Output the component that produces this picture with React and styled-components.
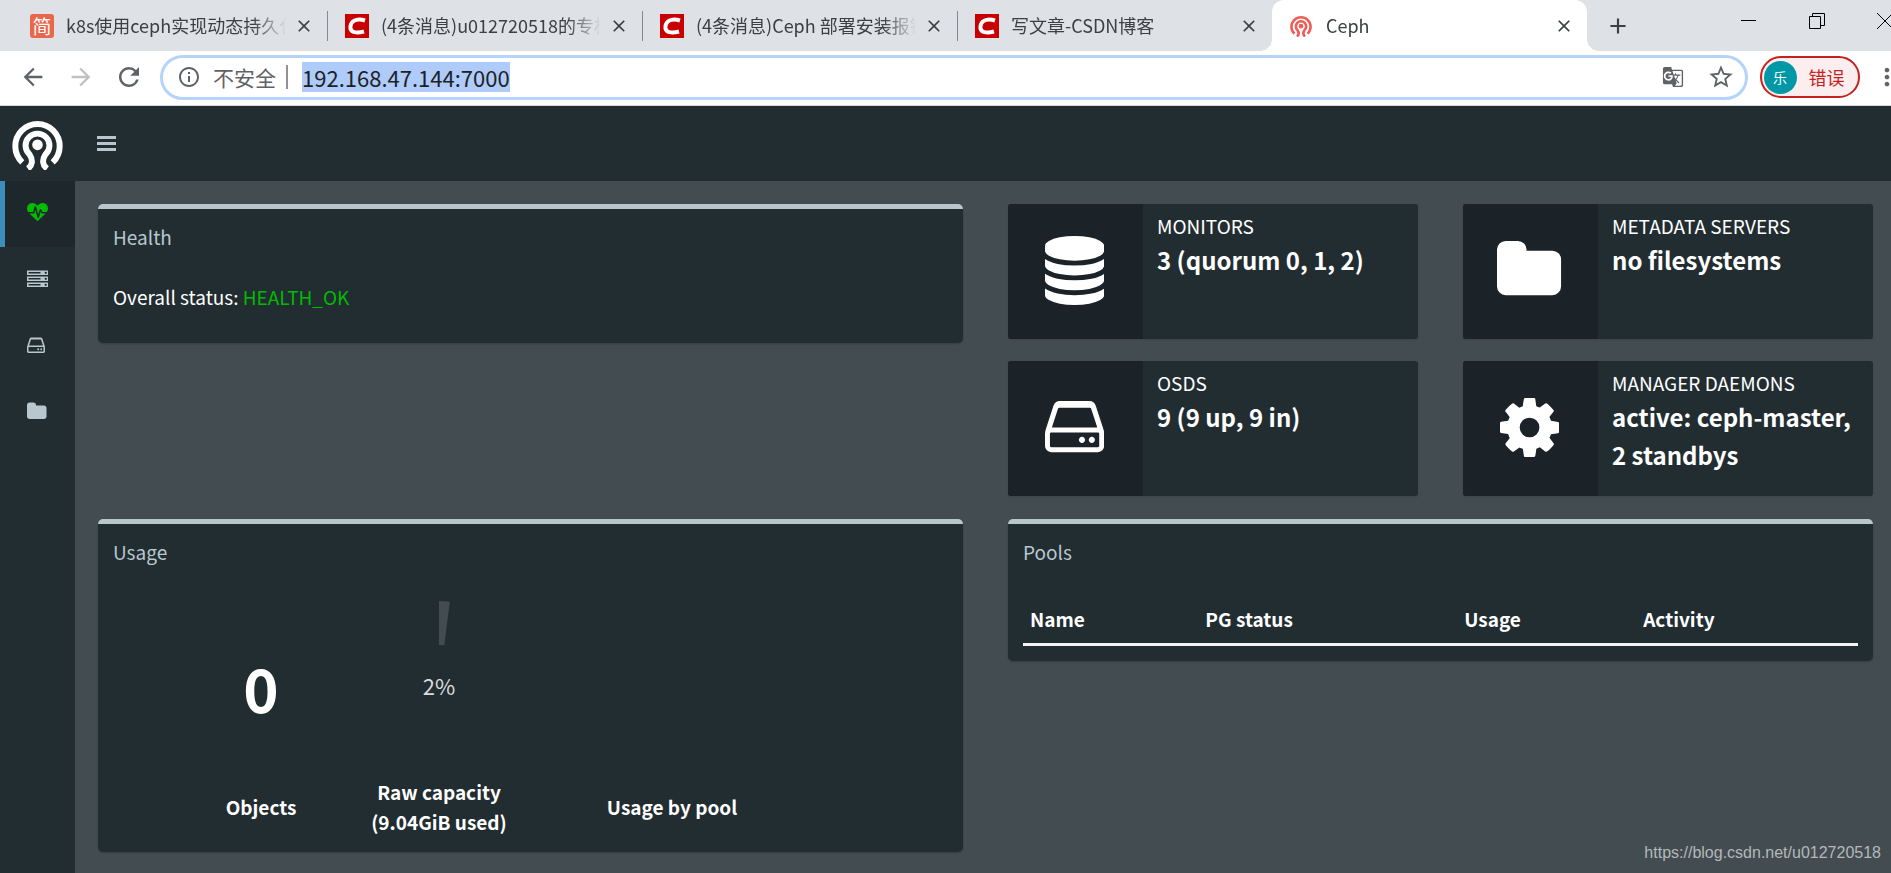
import styled, { createGlobalStyle } from "styled-components";
import { MdArrowBack, MdArrowForward, MdRefresh, MdInfoOutline, MdStarBorder, MdGTranslate, MdMoreVert, MdClose, MdAdd } from "react-icons/md";

const icons = {
  heartbeat: {
    box: "0 0 1792 1792",
    d: "M1280 896h305q-5 6-10 10.5t-9 7.5l-3 4-623 600q-18 18-44 18t-44-18l-624-602q-5-2-21-20h369q22 0 39.5-13.5t22.5-34.5l70-281 190 667q6 20 23 33t39 13q21 0 38-13t23-33l146-485 56 112q18 35 57 35zm512-428q0 145-103 300h-369l-111-221q-8-17-25.5-27t-36.5-8q-45 5-56 46l-129 430-196-686q-6-20-23.5-33t-39.5-13-39 13.5-22 34.5l-116 464h-423q-103-155-103-300 0-220 127-344t351-124q62 0 126.5 21.5t120 58 95.5 68.5 76 68q36-36 76-68t95.5-68.5 120-58 126.5-21.5q224 0 351 124t127 344z",
  },
  server: {
    box: "0 0 1792 1792",
    d: "M128 1408h1024v-128h-1024v128zm0-512h1024v-128h-1024v128zm1568 448q0-40-28-68t-68-28-68 28-28 68 28 68 68 28 68-28 28-68zm-1568-960h1024v-128h-1024v128zm1568 448q0-40-28-68t-68-28-68 28-28 68 28 68 68 28 68-28 28-68zm0-512q0-40-28-68t-68-28-68 28-28 68 28 68 68 28 68-28 28-68zm96 832v384h-1792v-384h1792zm0-512v384h-1792v-384h1792zm0-512v384h-1792v-384h1792z",
  },
  hdd: {
    box: "128 0 1536 1792",
    d: "M1168 1216q0 33-23.5 56.5t-56.5 23.5-56.5-23.5-23.5-56.5 23.5-56.5 56.5-23.5 56.5 23.5 23.5 56.5zm256 0q0 33-23.5 56.5t-56.5 23.5-56.5-23.5-23.5-56.5 23.5-56.5 56.5-23.5 56.5 23.5 23.5 56.5zm112 160v-320q0-13-9.5-22.5t-22.5-9.5h-1216q-13 0-22.5 9.5t-9.5 22.5v320q0 13 9.5 22.5t22.5 9.5h1216q13 0 22.5-9.5t9.5-22.5zm-1230-480h1180l-157-482q-4-13-16-21.5t-26-8.5h-782q-14 0-26 8.5t-16 21.5zm1358 160v320q0 66-47 113t-113 47h-1216q-66 0-113-47t-47-113v-320q0-49 25-126l197-606q16-50 60-82t96-32h782q52 0 96 32t60 82l197 606q25 77 25 126z",
  },
  folder: {
    box: "64 0 1664 1792",
    d: "M1728 608v704q0 92-66 158t-158 66h-1216q-92 0-158-66t-66-158v-960q0-92 66-158t158-66h320q92 0 158 66t66 158v32h672q92 0 158 66t66 158z",
  },
  database: {
    box: "128 0 1536 1792",
    d: "M896 768q237 0 443-43t325-127v170q0 69-103 128t-280 93.5-385 34.5-385-34.5-280-93.5-103-128v-170q119 84 325 127t443 43zm0 768q237 0 443-43t325-127v170q0 69-103 128t-280 93.5-385 34.5-385-34.5-280-93.5-103-128v-170q119 84 325 127t443 43zm0-384q237 0 443-43t325-127v170q0 69-103 128t-280 93.5-385 34.5-385-34.5-280-93.5-103-128v-170q119 84 325 127t443 43zm0-1152q208 0 385 34.5t280 93.5 103 128v128q0 69-103 128t-280 93.5-385 34.5-385-34.5-280-93.5-103-128v-128q0-69 103-128t280-93.5 385-34.5z",
  },
  cog: {
    box: "128 0 1536 1792",
    d: "M1152 896q0-106-75-181t-181-75-181 75-75 181 75 181 181 75 181-75 75-181zm512-109v222q0 12-8 23t-20 13l-185 28q-19 54-39 91 35 50 107 138 10 12 10 25t-9 23q-27 37-99 108t-94 71q-12 0-26-9l-138-108q-44 23-91 38-16 136-29 186-7 28-36 28h-222q-14 0-24.5-8.5t-11.5-21.5l-28-184q-49-16-90-37l-141 107q-10 9-25 9-14 0-25-11-126-114-165-168-7-10-7-23 0-12 8-23 15-21 51-66.5t54-70.5q-27-50-41-99l-183-27q-13-2-21-12.5t-8-23.5v-222q0-12 8-23t19-13l186-28q14-46 39-92-40-57-107-138-10-12-10-24 0-10 9-23 26-36 98.5-107.5t94.5-71.5q13 0 26 10l138 107q44-23 91-38 16-136 29-186 7-28 36-28h222q14 0 24.5 8.5t11.5 21.5l28 184q49 16 90 37l142-107q9-9 24-9 13 0 25 10 129 119 165 170 7 8 7 22 0 12-8 23-15 21-51 66.5t-54 70.5q26 50 41 98l183 28q13 2 21 12.5t8 23.5z",
  },
};

const Icon = ({ name, size }) => (
  <svg height={size} viewBox={icons[name].box} fill="currentColor" aria-hidden="true">
    <path d={icons[name].d} />
  </svg>
);

const CephLogo = ({ size }) => (
  <svg width={size} height={size} viewBox="0 0 154 154" fill="none" stroke="currentColor" strokeWidth="18" aria-hidden="true">
    <path d="M31 131A67 67 0 1 1 123 131" />
    <path d="M48 150C62 140 64 124 53 107A36 36 0 1 1 101 107C90 124 92 140 106 150" />
    <circle cx="77" cy="78" r="16" fill="currentColor" stroke="none" />
  </svg>
);

const tabs = [
  { icon: "jian", title: "k8s使用ceph实现动态持久化" },
  { icon: "csdn", title: "(4条消息)u012720518的专栏" },
  { icon: "csdn", title: "(4条消息)Ceph 部署安装报错" },
  { icon: "csdn", title: "写文章-CSDN博客" },
  { icon: "ceph", title: "Ceph", active: true },
];

const menu = [
  { icon: "heartbeat", label: "Cluster health", active: true },
  { icon: "server", label: "Cluster" },
  { icon: "hdd", label: "Block" },
  { icon: "folder", label: "Filesystems" },
];

const stats = [
  { icon: "database", label: "Monitors", value: "3 (quorum 0, 1, 2)" },
  { icon: "folder", label: "Metadata servers", value: "no filesystems" },
  { icon: "hdd", label: "OSDs", value: "9 (9 up, 9 in)" },
  { icon: "cog", label: "Manager daemons", value: "active: ceph-master, 2 standbys" },
];

const Favicon = ({ type }) => {
  if (type === "jian") return <JianIcon>简</JianIcon>;
  if (type === "ceph") return <CephIcon><CephLogo size={22} /></CephIcon>;
  return (
    <CsdnIcon>
      <svg width="24" height="24" viewBox="0 0 24 24" fill="none" aria-hidden="true">
        <path d="M20 6.500C15 5 7 4.500 5.500 12C4.500 19 12 19.500 19 17.500" stroke="#fff" strokeWidth="4" />
      </svg>
    </CsdnIcon>
  );
};

const Browser = () => (
  <>
    <TabStrip>
      {tabs.map((tab, i) => {
        const TabItem = tab.active ? ActiveTab : i < 3 ? DividedTab : Tab;
        return (
          <TabItem key={i}>
            <Favicon type={tab.icon} />
            <TabTitle>{tab.title}</TabTitle>
            <TabButton aria-label="Close tab"><MdClose size={20} stroke="currentColor" /></TabButton>
          </TabItem>
        );
      })}
      <NewTab aria-label="New tab"><MdAdd size={26} stroke="currentColor" /></NewTab>
      <WindowButtons>
        <TabButton aria-label="Minimize">
          <svg width="16" height="16" stroke="#000"><path d="M0 7.500H15" /></svg>
        </TabButton>
        <TabButton aria-label="Restore">
          <svg width="16" height="16" stroke="#000" fill="none"><path d="M.5 3.500H11.500V15.500H.5ZM3.500 3.500V.5H15.500V12.500H11.500" /></svg>
        </TabButton>
        <TabButton aria-label="Close">
          <svg width="16" height="16" stroke="#000"><path d="M0 0L16 16M16 0L0 16" /></svg>
        </TabButton>
      </WindowButtons>
    </TabStrip>
    <Toolbar>
      <ToolButton aria-label="Back"><MdArrowBack size={28} /></ToolButton>
      <ToolButton aria-label="Forward" $muted><MdArrowForward size={28} /></ToolButton>
      <ToolButton aria-label="Reload"><MdRefresh size={30} /></ToolButton>
      <AddressBar>
        <MdInfoOutline size={24} />
        <Insecure>不安全</Insecure>
        <Address><mark>192.168.47.144:7000</mark></Address>
        <ToolButton aria-label="Translate"><MdGTranslate size={22} /></ToolButton>
        <ToolButton aria-label="Bookmark"><MdStarBorder size={28} /></ToolButton>
      </AddressBar>
      <ProfileChip><Avatar>乐</Avatar>错误</ProfileChip>
      <MoreButton aria-label="More"><MdMoreVert size={28} /></MoreButton>
    </Toolbar>
  </>
);

const App = () => (
  <Page>
    <GlobalStyle />
    <Browser />
    <Header>
      <Logo href="#" aria-label="Ceph"><CephLogo size={51} /></Logo>
      <Toggle aria-label="Toggle navigation">
        <svg width="19" height="15" fill="currentColor"><path d="M0 0H19V3H0ZM0 6H19V9H0ZM0 12H19V15H0Z" /></svg>
      </Toggle>
    </Header>
    <Body>
      <Sidebar>
        {menu.map((item) => (
          <MenuLink key={item.icon} href="#" aria-label={item.label} $active={item.active}>
            <Icon name={item.icon} size={21} />
          </MenuLink>
        ))}
      </Sidebar>
      <Content>
        <Box>
          <BoxTitle>Health</BoxTitle>
          <Status>Overall status: <span>HEALTH_OK</span></Status>
        </Box>
        <Stats>
          {stats.map((stat) => (
            <InfoBox key={stat.label}>
              <InfoIcon><Icon name={stat.icon} size={69} /></InfoIcon>
              <InfoText>
                <InfoLabel>{stat.label}</InfoLabel>
                <InfoValue>{stat.value}</InfoValue>
              </InfoText>
            </InfoBox>
          ))}
        </Stats>
        <Box>
          <BoxTitle>Usage</BoxTitle>
          <UsageGrid>
            <ObjectCount>0</ObjectCount>
            <Gauge>
              <svg width="180" height="180" aria-hidden="true">
                <path d="M90 4A86 86 0 0 1 100.800 4.700L95.300 48.300A42 42 0 0 0 90 48Z" fill="#424c51" />
              </svg>
              <GaugeValue>2%</GaugeValue>
            </Gauge>
            <span />
            <UsageLabel>Objects</UsageLabel>
            <UsageLabel>Raw capacity<br />(9.04GiB used)</UsageLabel>
            <UsageLabel>Usage by pool</UsageLabel>
          </UsageGrid>
        </Box>
        <Box>
          <BoxTitle>Pools</BoxTitle>
          <PoolTable>
            <thead>
              <tr><th>Name</th><th>PG status</th><th>Usage</th><th>Activity</th></tr>
            </thead>
          </PoolTable>
        </Box>
      </Content>
    </Body>
    <Watermark>https://blog.csdn.net/u012720518</Watermark>
  </Page>
);

const GlobalStyle = createGlobalStyle`
  * {
    box-sizing: border-box;
  }
  body {
    margin: 0;
    background: #424c51;
    font-family: "Noto Sans CJK SC", sans-serif;
    font-size: 19px;
    line-height: 30px;
    color: #fff;
  }
  button {
    display: flex;
    align-items: center;
    justify-content: center;
    flex: none;
    padding: 0;
    border: none;
    background: none;
    color: inherit;
    font: inherit;
  }
  svg {
    display: block;
    flex: none;
  }
`;

const Page = styled.div`
  display: flex;
  flex-direction: column;
  min-height: 100vh;
  position: relative;
  overflow: hidden;
`;

const TabStrip = styled.div`
  display: flex;
  height: 51px;
  padding-left: 12px;
  background: #dee1e6;
  color: #3c4043;
`;

const Tab = styled.div`
  display: flex;
  align-items: center;
  flex: 0 1 315px;
  min-width: 0;
  padding: 0 13px 0 18px;
  position: relative;
`;

const DividedTab = styled(Tab)`
  &::after {
    content: "";
    position: absolute;
    right: -1px;
    top: 11px;
    width: 1px;
    height: 30px;
    background: #85888c;
  }
`;

const ActiveTab = styled(Tab)`
  border-radius: 12px 12px 0 0;
  background: #fff;

  &::before,
  &::after {
    content: "";
    position: absolute;
    bottom: 0;
    width: 12px;
    height: 12px;
  }
  &::before {
    left: -12px;
    background: radial-gradient(circle at 0 0, transparent 12px, #fff 12px);
  }
  &::after {
    right: -12px;
    background: radial-gradient(circle at 100% 0, transparent 12px, #fff 12px);
  }
`;

const TabTitle = styled.span`
  flex: 1;
  min-width: 0;
  margin: 0 8px 0 12px;
  overflow: hidden;
  white-space: nowrap;
  font-size: 18px;
  line-height: 28px;
  padding-bottom: 2px;
  mask-image: linear-gradient(to right, #000 85%, transparent);
`;

const TabButton = styled.button`
  width: 20px;
  height: 20px;
`;

const NewTab = styled.button`
  width: 62px;
`;

const JianIcon = styled.span`
  flex: none;
  width: 24px;
  height: 24px;
  border-radius: 3px;
  background: #e9664c;
  color: #fff;
  font-size: 19px;
  line-height: 23px;
  text-align: center;
`;

const CsdnIcon = styled.span`
  flex: none;
  background: #c90000;
`;

const CephIcon = styled.span`
  flex: none;
  width: 24px;
  color: #f05c56;
`;

const WindowButtons = styled.div`
  display: flex;
  gap: 48px;
  margin: 11px -4px 0 auto;
`;

const Toolbar = styled.div`
  display: flex;
  align-items: center;
  height: 55px;
  padding: 0 0 2px 9px;
  background: #fff;
  border-bottom: 1px solid #d5d9dc;
  color: #5f6368;
`;

const ToolButton = styled.button`
  width: 48px;
  height: 40px;
  opacity: ${(props) => (props.$muted ? 0.4 : 1)};
`;

const AddressBar = styled.div`
  display: flex;
  align-items: center;
  flex: 1;
  height: 45px;
  margin-left: 7px;
  padding: 0 0 0 14px;
  border: 3px solid #b5d3fb;
  border-radius: 23px;
`;

const Insecure = styled.span`
  margin-left: 12px;
  padding-right: 10px;
  border-right: 2px solid #909396;
  font-size: 21px;
  line-height: 24px;
`;

const Address = styled.span`
  flex: 1;
  margin-left: 14px;
  font-size: 22px;
  color: #202124;

  mark {
    display: block;
    width: fit-content;
    background: #aecbfa;
    color: inherit;
  }
`;

const ProfileChip = styled.button`
  width: 100px;
  height: 42px;
  margin-left: 12px;
  gap: 12px;
  border: 2px solid #c5221f;
  border-radius: 21px;
  background: #fceeee;
  color: #c5221f;
  font-size: 18px;
`;

const Avatar = styled.span`
  width: 33px;
  height: 33px;
  margin-left: -12px;
  border-radius: 50%;
  background: #0097a7;
  color: #fff;
  font-size: 14px;
  line-height: 32px;
`;

const MoreButton = styled(ToolButton)`
  width: 28px;
  margin: 0 -10px 0 13px;
`;

const Header = styled.header`
  display: flex;
  align-items: center;
  height: 75px;
  background: #222d32;
`;

const Logo = styled.a`
  display: flex;
  justify-content: center;
  width: 75px;
  padding-top: 2px;
  color: #fff;
`;

const Toggle = styled.button`
  width: 63px;
  height: 75px;
  color: #b8c7ce;
`;

const Body = styled.div`
  display: flex;
  flex: 1;
`;

const Sidebar = styled.nav`
  flex: none;
  width: 75px;
  background: #222d32;
`;

const MenuLink = styled.a`
  display: flex;
  align-items: center;
  height: 66px;
  padding: 0 0 2px 22px;
  border-left: 5px solid ${(props) => (props.$active ? "#3c8dbc" : "transparent")};
  background: ${(props) => (props.$active ? "#1e282c" : "none")};
  color: ${(props) => (props.$active ? "#00bb00" : "#b8c7ce")};
`;

const Content = styled.main`
  display: grid;
  grid-template-columns: minmax(0, 1fr) minmax(0, 1fr);
  align-items: start;
  align-content: start;
  gap: 23px 45px;
  flex: 1;
  padding: 23px 18px 20px 23px;
`;

const Box = styled.section`
  padding: 13px 15px 15px;
  border-top: 5px solid #b8c7ce;
  border-radius: 5px;
  background: #222d32;
  box-shadow: 0 1px 2px rgba(0, 0, 0, 0.2);
`;

const BoxTitle = styled.h3`
  margin: 0 0 30px;
  color: #b8c7ce;
  font-size: 19px;
  font-weight: 400;
`;

const Status = styled.p`
  margin: 0 0 16px;

  span {
    color: #00bb00;
  }
`;

const Stats = styled.div`
  display: grid;
  grid-template-columns: 1fr 1fr;
  gap: 22px 45px;
`;

const InfoBox = styled.div`
  display: flex;
  min-height: 135px;
  border-radius: 3px;
  overflow: hidden;
  background: #222d32;
  box-shadow: 0 1px 2px rgba(0, 0, 0, 0.1);
`;

const InfoIcon = styled.div`
  display: flex;
  align-items: center;
  justify-content: center;
  flex: none;
  width: 135px;
  padding: 0 2px 2px 0;
  background: #1b2328;
`;

const InfoText = styled.div`
  flex: 1;
  padding: 7px 8px 7px 14px;
`;

const InfoLabel = styled.div`
  text-transform: uppercase;
`;

const InfoValue = styled.div`
  font-size: 24px;
  line-height: 38px;
  font-weight: 700;
`;

const UsageGrid = styled.div`
  display: grid;
  grid-template-columns: 176px 180px 286px;
  align-items: center;
  justify-items: center;
  margin-left: 60px;
`;

const ObjectCount = styled.span`
  font-size: 60px;
  line-height: 90px;
  font-weight: 700;
`;

const Gauge = styled.div`
  display: grid;
  place-items: center;

  > * {
    grid-area: 1 / 1;
  }
`;

const GaugeValue = styled.span`
  padding-bottom: 4px;
  font-size: 22px;
  color: #d9dbdc;
`;

const UsageLabel = styled.strong`
  text-align: center;
`;

const PoolTable = styled.table`
  width: 100%;
  border-collapse: collapse;
  table-layout: fixed;

  th {
    padding: 7px 7px 9px;
    border-bottom: 3px solid #f4f4f4;
    text-align: left;
  }
  th:nth-child(1) {
    width: 21%;
  }
  th:nth-child(2) {
    width: 31%;
  }
  th:nth-child(3) {
    width: 179px;
  }
`;

const Watermark = styled.div`
  position: absolute;
  right: 10px;
  bottom: 10px;
  font-family: "Liberation Sans", sans-serif;
  font-size: 16px;
  line-height: 20px;
  color: #b4b8ba;
`;

export default App;
